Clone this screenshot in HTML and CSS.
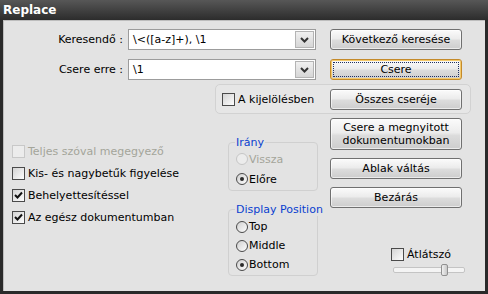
FILE: index.html
```html
<!DOCTYPE html>
<html lang="hu">
<head>
    <meta charset="UTF-8">
    <title>Replace</title>
    <link rel="stylesheet" href="styles.css">
</head>
<body>
    <div class="window">
        <div class="titlebar">Replace</div>
        <div class="client">
            <div class="search-rows">
                <label class="field-label">Keresendő :</label>
                <div class="combo">
                    <span class="combo-text">\&lt;([a-z]+), \1</span>
                    <span class="combo-btn"><svg width="9" height="6" viewBox="0 0 9 6"><path d="M1 1 L4.5 4.5 L8 1" fill="none" stroke="#333" stroke-width="2"/></svg></span>
                </div>
                <button class="btn">Következő keresése</button>

                <label class="field-label">Csere erre :</label>
                <div class="combo">
                    <span class="combo-text">\1</span>
                    <span class="combo-btn"><svg width="9" height="6" viewBox="0 0 9 6"><path d="M1 1 L4.5 4.5 L8 1" fill="none" stroke="#333" stroke-width="2"/></svg></span>
                </div>
                <button class="btn focused"><span class="focus-rect">Csere</span></button>
            </div>

            <div class="selection-panel">
                <span class="check"><span class="box"></span>A kijelölésben</span>
                <button class="btn">Összes cseréje</button>
            </div>

            <div class="lower">
                <div class="options">
                    <span class="check disabled"><span class="box"></span>Teljes szóval megegyező</span>
                    <span class="check"><span class="box"></span>Kis- és nagybetűk figyelése</span>
                    <span class="check"><span class="box"><svg width="11" height="11" viewBox="0 0 11 11"><path d="M2 5 L4.5 7.5 L9 2.5" fill="none" stroke="#111" stroke-width="2"/></svg></span>Behelyettesítéssel</span>
                    <span class="check"><span class="box"><svg width="11" height="11" viewBox="0 0 11 11"><path d="M2 5 L4.5 7.5 L9 2.5" fill="none" stroke="#111" stroke-width="2"/></svg></span>Az egész dokumentumban</span>
                </div>

                <div class="groups">
                    <fieldset class="group direction">
                        <legend>Irány</legend>
                        <span class="radio disabled"><span class="dot"></span>Vissza</span>
                        <span class="radio"><span class="dot on"></span>Előre</span>
                    </fieldset>
                    <fieldset class="group position">
                        <legend>Display Position</legend>
                        <span class="radio"><span class="dot"></span>Top</span>
                        <span class="radio"><span class="dot"></span>Middle</span>
                        <span class="radio"><span class="dot on"></span>Bottom</span>
                    </fieldset>
                </div>

                <div class="actions">
                    <button class="btn tall">Csere a megnyitott<br>dokumentumokban</button>
                    <button class="btn">Ablak váltás</button>
                    <button class="btn">Bezárás</button>
                    <span class="check transparency"><span class="box"></span>Átlátszó</span>
                    <div class="slider"><span class="thumb"></span></div>
                </div>
            </div>
        </div>
    </div>
</body>
</html>
```

FILE: styles.css
```css
body {
    margin: 0;
    font-family: "DejaVu Sans", Verdana, sans-serif;
    font-size: 11px;
    color: #000;
    background: #2b2b2b;
}

.window {
    width: 488px;
    height: 294px;
    display: flex;
    flex-direction: column;
    background: #2a2a2a;
}

.titlebar {
    height: 20px;
    line-height: 20px;
    padding-left: 3px;
    color: #fff;
    font-size: 12px;
    font-weight: bold;
    background: linear-gradient(#575757, #2c2c2c);
}

.client {
    flex: 1;
    margin: 0 3px 3px 3px;
    background: #e3e3e3;
    box-shadow: inset 1px 1px 0 #bdbdbd;
}

/* keresés / csere sorok */
.search-rows {
    display: grid;
    grid-template-columns: 125px 202px 132px;
    grid-auto-rows: 21px;
    row-gap: 9px;
    align-items: center;
    padding-top: 9px;
}

.field-label {
    text-align: right;
    padding-right: 5px;
}

.combo {
    display: flex;
    align-items: stretch;
    width: 188px;
    height: 21px;
    box-sizing: border-box;
    border: 1px solid #9c9c9c;
    background: #fff;
    padding: 1px;
}

.combo-text {
    flex: 1;
    padding-left: 3px;
    line-height: 17px;
}

.combo-btn {
    width: 17px;
    display: flex;
    align-items: center;
    justify-content: center;
    border: 1px solid #b4b4b4;
    background: linear-gradient(#f0f0f0, #d6d6d6);
}

.btn {
    width: 132px;
    height: 21px;
    padding: 0;
    font: inherit;
    color: #000;
    border: 1px solid #707070;
    border-radius: 3px;
    background: linear-gradient(#fbfbfb, #ececec 45%, #dcdcdc 55%, #cdcdcd);
    box-shadow: inset 0 0 0 1px rgba(255,255,255,0.6);
}

.btn.tall {
    height: 32px;
    line-height: 13px;
}

.btn.focused {
    border-color: #c48a2a;
    box-shadow: inset 0 0 0 1px #f4c96a;
    padding: 2px;
}

.focus-rect {
    display: flex;
    align-items: center;
    justify-content: center;
    height: 100%;
    box-sizing: border-box;
    border: 1px dotted #203060;
}

/* kijelölés panel */
.selection-panel {
    display: flex;
    align-items: center;
    justify-content: space-between;
    width: 256px;
    height: 30px;
    box-sizing: border-box;
    margin: 4px 0 0 212px;
    padding: 0 8px 0 6px;
    border: 1px solid #d2d2d2;
    border-radius: 5px;
    background: #e6e6e6;
}

/* jelölőnégyzetek */
.check {
    display: flex;
    align-items: center;
    gap: 3px;
    height: 22px;
    white-space: nowrap;
}

.box {
    width: 13px;
    height: 13px;
    box-sizing: border-box;
    display: flex;
    align-items: center;
    justify-content: center;
    border: 1px solid #4a4a4a;
    background: linear-gradient(135deg, #d4d4d4, #fdfdfd);
}

.check.disabled {
    color: #a4a59a;
}

.check.disabled .box {
    border-color: #c8c8c8;
    background: #ececec;
}

.lower {
    display: grid;
    grid-template-columns: 204px 90px 132px;
    column-gap: 12px;
    padding-left: 9px;
}

.options {
    display: flex;
    flex-direction: column;
    margin-top: 26px;
}

/* csoportok */
.groups {
    display: flex;
    flex-direction: column;
}

.group {
    margin: 0;
    padding: 0 0 1px 7px;
    border: 1px solid #d0d0d0;
    border-radius: 4px;
    min-width: 0;
}

.group legend {
    color: #0a3fd0;
    padding: 0 1px;
    margin-left: -1px;
    line-height: 13px;
    white-space: nowrap;
}

.direction {
    margin-top: 22px;
}

.position {
    margin-top: 12px;
    padding-top: 1px;
}

.radio {
    display: flex;
    align-items: center;
    gap: 1px;
    height: 20px;
}

.position .radio {
    height: 19px;
}

.dot {
    width: 12px;
    height: 12px;
    box-sizing: border-box;
    border-radius: 50%;
    border: 1px solid #4a4a4a;
    background: linear-gradient(135deg, #d0d0d0, #fdfdfd);
    display: flex;
    align-items: center;
    justify-content: center;
}

.dot.on::after {
    content: "";
    width: 4px;
    height: 4px;
    border-radius: 50%;
    background: #2a2a2a;
}

.radio.disabled {
    color: #a4a59a;
}

.radio.disabled .dot {
    border-color: #c6c6c6;
    background: #ececec;
}

/* gombok jobbra */
.actions {
    display: flex;
    flex-direction: column;
}

.actions .btn.tall {
    margin-top: 4px;
}

.actions .btn + .btn {
    margin-top: 8px;
}

.transparency {
    margin: 35px 0 0 61px;
}

.slider {
    position: relative;
    width: 70px;
    height: 4px;
    margin: 2px 0 0 63px;
    border: 1px solid #c4c4c4;
    border-radius: 2px;
    background: #f4f4f4;
}

.thumb {
    position: absolute;
    left: 47px;
    top: -4px;
    width: 5px;
    height: 10px;
    border: 1px solid #909090;
    border-radius: 2px;
    background: linear-gradient(90deg, #f0f0f0, #c8c8c8);
}
```
